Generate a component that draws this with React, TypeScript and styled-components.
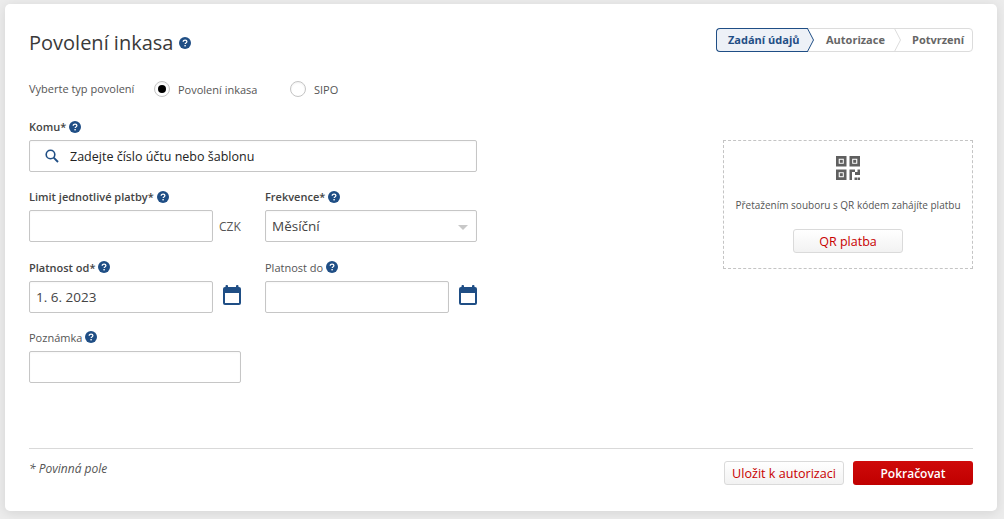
import React from "react";
import styled, { createGlobalStyle } from "styled-components";

const Global = createGlobalStyle`
  html, body { margin: 0; padding: 0; background: #ececec; }
  body { font-family: "Open Sans", "Liberation Sans", sans-serif; color: #333; }
  * { box-sizing: border-box; }
`;

const Page = styled.div`
  width: 1004px;
  height: 519px;
  padding: 4px 7px 8px 5px;
  overflow: hidden;
`;

const Card = styled.main`
  height: 507px;
  background: #fff;
  border-radius: 5px;
  box-shadow: 0 2px 12px rgba(0, 0, 0, 0.1);
  padding: 24px 24px 0;
  display: flex;
  flex-direction: column;
`;

const Header = styled.header`
  display: flex;
  justify-content: space-between;
  align-items: flex-start;
  height: 36px;
`;

const TitleWrap = styled.div`
  display: flex;
  align-items: center;
  gap: 6px;
  height: 30px;
`;

const Title = styled.h1`
  margin: 0;
  font-size: 20px;
  line-height: 30px;
  font-weight: 400;
  color: #3a3a3a;
`;

const Stepper = styled.ol`
  position: relative;
  list-style: none;
  margin: 0;
  padding: 0;
  display: flex;
  width: 257px;
  height: 24px;
  border: 1px solid #dcdcdc;
  border-radius: 4px;
`;

const Step = styled.li<{ $w: number }>`
  width: ${(p) => p.$w}px;
  padding-left: 18px;
  font-size: 11px;
  line-height: 22px;
  font-weight: 700;
  color: #666;
`;

const ActiveStep = styled(Step)`
  margin: -1px 0 -1px -1px;
  height: 24px;
  padding-left: 11px;
  background: #edf1f7;
  border: 1px solid #1f4e85;
  border-right: 0;
  border-radius: 4px 0 0 4px;
  color: #1f4e85;
`;

const Chevron = styled.svg<{ $left: number }>`
  position: absolute;
  top: -1px;
  left: ${(p) => p.$left}px;
`;

const RadioRow = styled.div`
  display: flex;
  align-items: center;
  height: 24px;
  margin-top: 13px;
  font-size: 11px;
  color: #555;
`;

const RadioCaption = styled.span`
  width: 125px;
  margin-top: -1px;
`;

const RadioOption = styled.label<{ $w: number }>`
  display: flex;
  align-items: center;
  gap: 8px;
  width: ${(p) => p.$w}px;
`;

const RadioCircle = styled.span<{ $on?: boolean }>`
  width: 16px;
  height: 16px;
  border-radius: 50%;
  border: 1px solid #c4c4c4;
  background: #fff;
  box-shadow: inset 0 1px 2px rgba(0, 0, 0, 0.06);
  display: flex;
  align-items: center;
  justify-content: center;

  &::after {
    content: "";
    display: ${(p) => (p.$on ? "block" : "none")};
    width: 8px;
    height: 8px;
    border-radius: 50%;
    background: #000;
  }
`;

const Body = styled.div`
  display: flex;
  justify-content: space-between;
  align-items: flex-start;
  flex: 1;
`;

const Form = styled.div`
  width: 448px;
  margin-top: 17px;
  display: grid;
  grid-template-columns: 212px 212px;
  column-gap: 24px;
  row-gap: 16.3px;
`;

const Field = styled.div<{ $wide?: boolean }>`
  grid-column: ${(p) => (p.$wide ? "1 / 3" : "auto")};
`;

const Label = styled.div<{ $bold?: boolean }>`
  display: flex;
  align-items: center;
  gap: 3px;
  height: 17px;
  margin-bottom: 5px;
  font-size: 11px;
  font-weight: ${(p) => (p.$bold ? 600 : 400)};
  color: ${(p) => (p.$bold ? "#444" : "#555")};
`;

const Control = styled.div`
  display: flex;
  align-items: center;
`;

const Box = styled.div<{ $w?: number }>`
  width: ${(p) => (p.$w ? `${p.$w}px` : "100%")};
  flex-shrink: 0;
  height: 32px;
  border: 1px solid #c6c6c6;
  border-radius: 2px;
  background: #fff;
  display: flex;
  align-items: center;
  padding: 0 6px;
  font-size: 13.5px;
  color: #444;
  box-shadow: inset 0 1px 2px rgba(0, 0, 0, 0.03);
`;

const SearchBox = styled(Box)`
  padding-left: 15px;
  gap: 11px;
  font-size: 12.5px;
  font-weight: 500;
  color: #222;
`;

const SelectBox = styled(Box)`
  justify-content: space-between;
  padding-right: 8px;
`;

const Caret = styled.span`
  width: 0;
  height: 0;
  border-left: 5px solid transparent;
  border-right: 5px solid transparent;
  border-top: 5px solid #c8c8c8;
  margin-top: 2px;
`;

const Unit = styled.span`
  margin-left: 6px;
  font-size: 12px;
  color: #555;
`;

const CalendarSlot = styled.span`
  display: flex;
  margin: 0 0 4px 10px;
`;

const QrPanel = styled.section`
  width: 250px;
  height: 129px;
  margin-top: 39px;
  border: 1px dashed #c4c4c4;
  display: flex;
  flex-direction: column;
  align-items: center;
  padding-top: 15px;
`;

const QrText = styled.p`
  margin: 17px 0 0;
  font-size: 10px;
  line-height: 16px;
  color: #555;
`;

const GhostButton = styled.button<{ $w: number }>`
  width: ${(p) => p.$w}px;
  height: 24px;
  padding: 0;
  border: 1px solid #dadada;
  border-radius: 3px;
  background: linear-gradient(#fff, #f2f2f2);
  color: #c80000;
  font-family: inherit;
  font-size: 12.6px;
  font-weight: 400;
`;

const QrButton = styled(GhostButton)`
  margin-top: 16px;
  font-size: 12.5px;
`;

const Footer = styled.footer`
  border-top: 1px solid #d9d9d9;
  height: 63px;
  padding-top: 12px;
  display: flex;
  justify-content: space-between;
  align-items: flex-start;
`;

const Note = styled.em`
  font-size: 12px;
  line-height: 16px;
  color: #555;
`;

const Actions = styled.div`
  display: flex;
  gap: 9px;
`;

const PrimaryButton = styled.button`
  width: 120px;
  height: 24px;
  padding: 0;
  border: 0;
  border-radius: 3px;
  background: linear-gradient(#cf0a0a, #c00000);
  color: #fff;
  font-family: inherit;
  font-size: 12px;
  font-weight: 600;
`;

const Help = ({ size = 12 }: { size?: number }) => (
  <svg width={size} height={size} viewBox="0 0 12 12" aria-hidden="true">
    <circle cx="6" cy="6" r="6" fill="#1f4e85" />
    <path d="M4.2 4.7c0-1 .8-1.6 1.9-1.6s1.8.6 1.8 1.5c0 .7-.4 1-1 1.4-.5.3-.7.6-.7 1.1" fill="none" stroke="#fff" strokeWidth="1.3" />
    <rect x="5.4" y="8" width="1.4" height="1.4" fill="#fff" />
  </svg>
);

const Calendar = () => (
  <svg width="18" height="20" viewBox="0 0 18 20" aria-hidden="true">
    <rect x="0" y="2" width="18" height="18" rx="2" fill="#1f4e85" />
    <rect x="2" y="8" width="14" height="10" fill="#fff" />
    <rect x="2.500" y="0" width="2.500" height="4" rx="1" fill="#1f4e85" />
    <rect x="13" y="0" width="2.500" height="4" rx="1" fill="#1f4e85" />
  </svg>
);

const Search = () => (
  <svg width="14" height="14" viewBox="0 0 14 14" aria-hidden="true">
    <circle cx="5.500" cy="5.500" r="4.300" fill="none" stroke="#1f4e85" strokeWidth="1.600" />
    <path d="M8.700 8.700 13 13" stroke="#1f4e85" strokeWidth="1.900" />
  </svg>
);

const QrIcon = () => (
  <svg width="24" height="24" viewBox="0 0 24 24" fill="#5f5f5f" aria-hidden="true">
    <path fillRule="evenodd" d="M0 0h10.500v10.500H0ZM2.700 2.700v5.100h5.100V2.700ZM13.500 0H24v10.500H13.500ZM16.200 2.700v5.100h5.100V2.700ZM0 13.500h10.500V24H0ZM2.700 16.200v5.100h5.100v-5.100Z" />
    <rect x="3.800" y="3.800" width="3" height="3" />
    <rect x="17.200" y="3.800" width="3" height="3" />
    <rect x="3.800" y="17.200" width="3" height="3" />
    <path d="M13.500 13.500H19V16h2.500v-2.500H24V19h-5v-3h-3v8h-2.500Z" />
    <rect x="18.500" y="21.500" width="2.500" height="2.500" />
    <rect x="21.500" y="21.500" width="2.500" height="2.500" />
  </svg>
);

const Arrow = ({ left, color, fill }: { left: number; color: string; fill?: string }) => (
  <Chevron $left={left} width="8" height="24" viewBox="0 0 8 24" aria-hidden="true">
    {fill && <path d="M0 .5 6.500 12 0 23.500Z" fill={fill} />}
    <path d="M.5 .5 6.500 12 .5 23.500" fill="none" stroke={color} strokeWidth="1" />
  </Chevron>
);

export default function App() {
  return (
    <Page>
      <Global />
      <Card>
        <Header>
          <TitleWrap>
            <Title>Povolení inkasa</Title>
            <Help />
          </TitleWrap>
          <Stepper>
            <ActiveStep $w={92}>Zadání údajů</ActiveStep>
            <Step $w={86}>Autorizace</Step>
            <Step $w={78}>Potvrzení</Step>
            <Arrow left={90} color="#1f4e85" fill="#edf1f7" />
            <Arrow left={177} color="#dcdcdc" />
          </Stepper>
        </Header>

        <RadioRow>
          <RadioCaption>Vyberte typ povolení</RadioCaption>
          <RadioOption $w={136}>
            <RadioCircle $on />
            Povolení inkasa
          </RadioOption>
          <RadioOption $w={60}>
            <RadioCircle />
            SIPO
          </RadioOption>
        </RadioRow>

        <Body>
          <Form>
            <Field $wide>
              <Label $bold>Komu* <Help /></Label>
              <SearchBox>
                <Search />
                Zadejte číslo účtu nebo šablonu
              </SearchBox>
            </Field>
            <Field>
              <Label $bold>Limit jednotlivé platby* <Help /></Label>
              <Control>
                <Box $w={184} />
                <Unit>CZK</Unit>
              </Control>
            </Field>
            <Field>
              <Label $bold>Frekvence* <Help /></Label>
              <SelectBox>
                Měsíční
                <Caret />
              </SelectBox>
            </Field>
            <Field>
              <Label $bold>Platnost od* <Help /></Label>
              <Control>
                <Box $w={184}>1. 6. 2023</Box>
                <CalendarSlot><Calendar /></CalendarSlot>
              </Control>
            </Field>
            <Field>
              <Label>Platnost do <Help /></Label>
              <Control>
                <Box $w={184} />
                <CalendarSlot><Calendar /></CalendarSlot>
              </Control>
            </Field>
            <Field>
              <Label>Poznámka <Help /></Label>
              <Box />
            </Field>
          </Form>

          <QrPanel>
            <QrIcon />
            <QrText>Přetažením souboru s QR kódem zahájíte platbu</QrText>
            <QrButton $w={110}>QR platba</QrButton>
          </QrPanel>
        </Body>

        <Footer>
          <Note>* Povinná pole</Note>
          <Actions>
            <GhostButton $w={120}>Uložit k autorizaci</GhostButton>
            <PrimaryButton>Pokračovat</PrimaryButton>
          </Actions>
        </Footer>
      </Card>
    </Page>
  );
}
